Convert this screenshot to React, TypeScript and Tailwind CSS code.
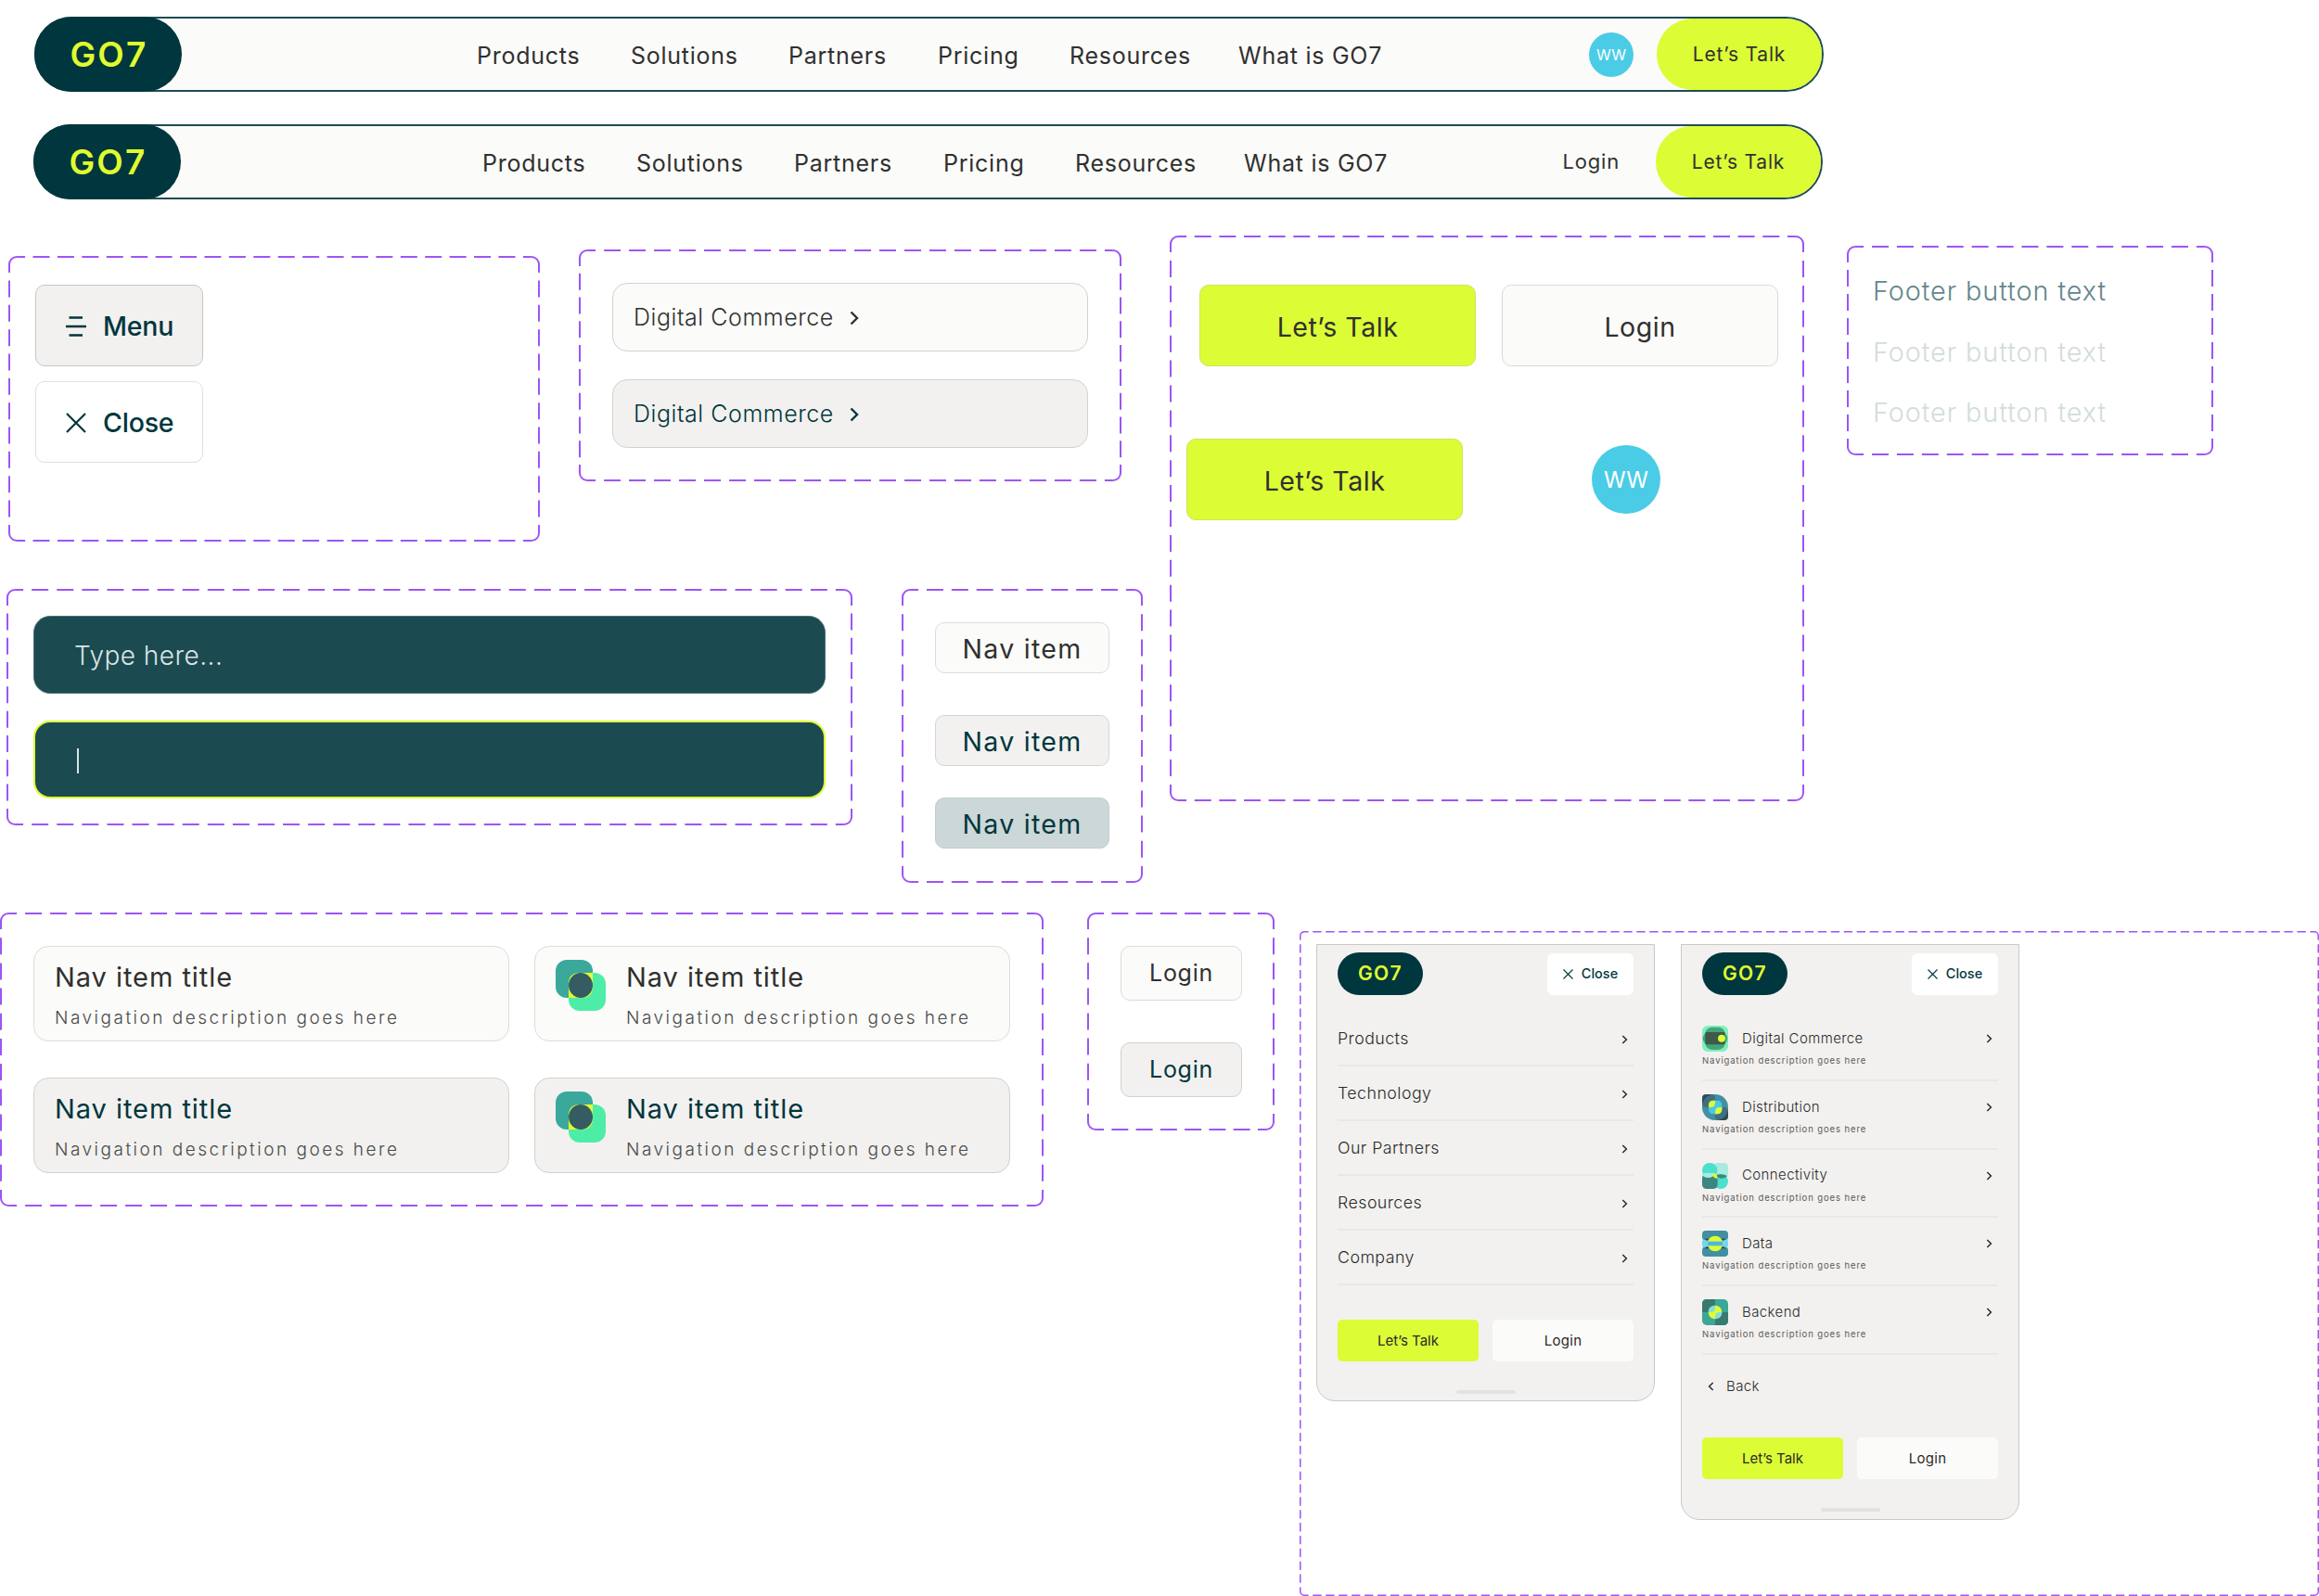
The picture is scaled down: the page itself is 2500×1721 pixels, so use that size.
import React from "react";

const NAV_LINKS = ["Products", "Solutions", "Partners", "Pricing", "Resources", "What is GO7"];
const MENU_LINKS = ["Products", "Technology", "Our Partners", "Resources", "Company"];

interface FrameProps {
  w: number;
  h: number;
  dash?: number;
  stroke?: number;
  className: string;
  children?: React.ReactNode;
}

// Component set outline: every side starts and ends on half a dash
const Frame = ({ w, h, dash = 18, stroke = 2, className, children }: FrameProps) => {
  const r = dash * 0.45;
  const s = stroke / 2;
  const side = (length: number) => {
    const pitch = length / Math.round(length / (dash * 1.5));
    return {
      strokeDasharray: `${dash} ${pitch - dash}`,
      strokeDashoffset: dash / 2,
    };
  };
  const across = side(w - 2 * (r + s));
  const down = side(h - 2 * (r + s));

  return (
    <div className={`relative shrink-0 ${className}`}>
      <svg
        width={w}
        height={h}
        fill="none"
        stroke="#9d55f5"
        strokeWidth={stroke}
        className="pointer-events-none absolute top-0 left-0"
      >
        <path d={`M${r + s} ${s}H${w - r - s}`} {...across} />
        <path d={`M${r + s} ${h - s}H${w - r - s}`} {...across} />
        <path d={`M${s} ${r + s}V${h - r - s}`} {...down} />
        <path d={`M${w - s} ${r + s}V${h - r - s}`} {...down} />
        <path d={`M${s} ${r + s}A${r} ${r} 0 0 1 ${r + s} ${s}`} />
        <path d={`M${w - r - s} ${s}A${r} ${r} 0 0 1 ${w - s} ${r + s}`} />
        <path d={`M${w - s} ${h - r - s}A${r} ${r} 0 0 1 ${w - r - s} ${h - s}`} />
        <path d={`M${r + s} ${h - s}A${r} ${r} 0 0 1 ${s} ${h - r - s}`} />
      </svg>
      {children}
    </div>
  );
};

const Chevron = ({ className }: { className: string }) => (
  <svg viewBox="0 0 10 16" fill="none" stroke="currentColor" strokeWidth="2.4" className={className}>
    <path d="M1.5 1.5L8 8L1.5 14.5" />
  </svg>
);

const Cross = ({ className }: { className: string }) => (
  <svg viewBox="0 0 22 22" fill="none" stroke="currentColor" strokeWidth="2.2" className={className}>
    <path d="M1 1L21 21M21 1L1 21" />
  </svg>
);

const Burger = () => (
  <svg viewBox="0 0 22 22" fill="none" stroke="currentColor" strokeWidth="2.6" className="size-[22px]">
    <path d="M3.5 1.5H18M0 11H22M3.5 20.5H18" />
  </svg>
);

const ShapesIcon = () => (
  <svg viewBox="0 0 54 55" className="h-[55px] w-[54px] shrink-0">
    <rect width="40" height="41" rx="12" fill="#3aa99b" />
    <rect x="14" y="14" width="40" height="41" rx="12" fill="#4deda8" />
    <path d="M26 14H40V29Q40 41 28 41H14V26Q14 14 26 14Z" fill="#e2fc2f" />
    <ellipse cx="27" cy="27.5" rx="13" ry="13.5" fill="#355c63" />
  </svg>
);

const CommerceIcon = () => (
  <svg viewBox="0 0 84 84" className="size-7">
    <rect width="84" height="84" rx="18" fill="#7df0be" />
    <rect x="10" y="5" width="64" height="73" rx="22" fill="#45a577" />
    <rect x="2" y="21" width="80" height="40" rx="20" fill="#45a577" />
    <rect x="10" y="21" width="64" height="40" rx="4" fill="#3d5a4a" />
    <circle cx="63" cy="41" r="12" fill="#dcfc36" />
  </svg>
);

const DistributionIcon = () => (
  <svg viewBox="0 0 84 84" className="size-7">
    <clipPath id="dist">
      <circle cx="42" cy="42" r="42" />
    </clipPath>
    <rect width="42" height="42" rx="12" fill="#2f4a52" />
    <rect x="42" y="42" width="42" height="42" rx="12" fill="#2f4a52" />
    <circle cx="42" cy="42" r="42" fill="#438fa3" />
    <g clipPath="url(#dist)">
      <rect width="42" height="42" rx="12" fill="#40707d" />
      <rect x="42" y="42" width="42" height="42" rx="12" fill="#40707d" />
    </g>
    <rect x="21" y="20" width="43" height="44" rx="14" fill="#4bc8e4" />
    <path d="M42 20V26Q42 42 27 42H21V36Q21 20 37 20Z" fill="#dcfc36" />
    <path d="M42 64V58Q42 42 57 42H64V48Q64 64 48 64Z" fill="#dcfc36" />
  </svg>
);

const ConnectivityIcon = () => (
  <svg viewBox="0 0 84 84" className="size-7">
    <rect x="36" width="48" height="48" rx="14" fill="#a8ebe0" />
    <rect width="49" height="48" rx="24" fill="#4bdfce" />
    <rect x="36" y="36" width="48" height="48" rx="24" fill="#4bdfce" />
    <rect y="36" width="50" height="48" rx="14" fill="#3b877d" />
    <path d="M0 36Q20 28 42 36Q34 48 20 48Q4 48 0 36Z" fill="#a8ebe0" />
    <path d="M44 40Q62 32 82 42Q74 50 62 50Q48 50 44 40Z" fill="#3b877d" />
    <path d="M32 32Q50 32 50 50Q34 50 32 32Z" fill="#dcfc36" />
  </svg>
);

const DataIcon = () => (
  <svg viewBox="0 0 84 84" className="size-7">
    <rect width="84" height="32" rx="12" fill="#418fa0" />
    <rect y="52" width="84" height="32" rx="12" fill="#418fa0" />
    <rect y="28" width="84" height="28" rx="10" fill="#74d5ee" />
    <path d="M6 26H78Q72 33 62 33H22Q12 33 6 26ZM6 58H78Q72 51 62 51H22Q12 51 6 58Z" fill="#22505a" />
    <circle cx="42" cy="42" r="25" fill="#dcfc36" />
    <rect x="18" y="35" width="48" height="14" fill="#4bb8dc" />
  </svg>
);

const BackendIcon = () => (
  <svg viewBox="0 0 84 84" className="size-7">
    <clipPath id="core">
      <circle cx="42" cy="42" r="22" />
    </clipPath>
    <rect width="84" height="84" rx="15" fill="#3ca796" />
    <path d="M0 15Q0 0 15 0H42V28Q42 42 28 42H0Z" fill="#387a70" />
    <path d="M84 69Q84 84 69 84H42V56Q42 42 56 42H84Z" fill="#387a70" />
    <circle cx="42" cy="42" r="22" fill="#dcfc36" />
    <g clipPath="url(#core)" fill="#83dedb">
      <path d="M0 0H42V28Q42 42 28 42H0Z" />
      <path d="M84 84H42V56Q42 42 56 42H84Z" />
    </g>
  </svg>
);

const PRODUCTS = [
  { title: "Digital Commerce", Icon: CommerceIcon },
  { title: "Distribution", Icon: DistributionIcon },
  { title: "Connectivity", Icon: ConnectivityIcon },
  { title: "Data", Icon: DataIcon },
  { title: "Backend", Icon: BackendIcon },
];

const NavBar = ({ className, links, children }: { className: string; links: string; children: React.ReactNode }) => (
  <header
    className={`flex h-[81px] w-[1929px] items-stretch rounded-[41px] border-2 border-[#1f4c54] bg-[#fbfbf9] ${className}`}
  >
    <div className="-my-0.5 -ml-0.5 flex w-[159px] shrink-0 items-center justify-center rounded-full bg-[#00363d] pt-px pl-0.5 text-[37px] font-semibold tracking-[2.2px] text-[#e0fc2f]">
      GO7
    </div>
    <nav
      className={`grid w-[980px] shrink-0 grid-cols-[166px_170px_161px_142px_182px_auto] items-center pt-[5px] text-[25px] tracking-[0.75px] text-[#303030] ${links}`}
    >
      {NAV_LINKS.map((link) => (
        <a key={link} className="whitespace-nowrap">
          {link}
        </a>
      ))}
    </nav>
    <div className="ml-auto flex items-center text-[21px] tracking-[0.8px] text-[#303030]">
      {children}
      <button className="flex w-[178px] items-center justify-center self-stretch rounded-full bg-[#dcfc36] pt-px">
        Let’s Talk
      </button>
    </div>
  </header>
);

const NavCard = ({ hover, icon }: { hover?: boolean; icon?: boolean }) => (
  <div
    className={`flex h-[103px] w-[513px] gap-[22px] rounded-2xl border pt-[14px] pl-[22px] ${
      hover ? "border-[#d2d1cf] bg-[#f2f1ef]" : "border-[#dcdcda] bg-[#fbfbf9]"
    }`}
  >
    {icon && <ShapesIcon />}
    <div>
      <h4 className={`-mt-px text-[29px] leading-10 tracking-[0.95px] ${hover ? "text-[#00363d]" : "text-[#303030]"}`}>
        Nav item title
      </h4>
      <p className="mt-3 text-[19px] leading-6 font-light tracking-[2.5px] whitespace-nowrap text-[#4a4a4a]">
        Navigation description goes here
      </p>
    </div>
  </div>
);

const MobileMenu = ({ className, children }: { className: string; children: React.ReactNode }) => (
  <div
    className={`flex w-[365px] flex-col rounded-b-[20px] border border-[#c9c9c9] bg-[#f2f1ef] px-[22px] pt-2 text-[#2b2b2b] ${className}`}
  >
    <div className="flex items-center justify-between">
      <div className="flex h-[46px] w-[92px] items-center justify-center rounded-full bg-[#00363d] text-[21px] font-semibold tracking-[1.3px] text-[#e0fc2f]">
        GO7
      </div>
      <button className="flex h-[45px] w-[93px] items-center justify-center gap-[9px] rounded-md bg-white text-[14.5px] font-medium text-[#00363d]">
        <Cross className="size-[11px]" />
        Close
      </button>
    </div>
    {children}
    <div className="flex justify-between text-[15px]">
      <button className="h-[45px] w-[152px] rounded-[5px] bg-[#dcfc36] pt-px">Let’s Talk</button>
      <button className="h-[45px] w-[152px] rounded-[5px] bg-[#fbfbf9] pt-px tracking-[0.3px]">Login</button>
    </div>
    <div className="mx-auto mt-[31px] h-1 w-16 rounded-full bg-[#e3e2e0]" />
  </div>
);

const App = () => {
  return (
    <div className="h-[1721px] w-[2500px] overflow-hidden bg-white pt-[18px] font-['Inter','Liberation_Sans',sans-serif]">
      <NavBar className="ml-[37px]" links="ml-[318px]">
        <span className="mr-[25px] flex size-12 items-center justify-center rounded-full bg-[#4bcce6] text-[16px] tracking-normal text-white">
          WW
        </span>
      </NavBar>
      <NavBar className="mt-[35px] ml-[36px]" links="ml-[325px]">
        <span className="mr-[39px] text-[22px]">Login</span>
      </NavBar>

      <main className="mt-[39px]">
        <section className="flex h-[698px] items-start">
          <div className="w-[1232px] shrink-0">
            <div className="flex h-[330px] items-start">
              <Frame w={573} h={308} className="mt-[22px] ml-[9px] h-[308px] w-[573px] pt-[31px] pl-[29px]">
                <div className="flex flex-col gap-4 text-[28.5px] tracking-[-0.2px] text-[#00363d]">
                  <button className="flex h-[88px] w-[181px] items-center gap-[18px] rounded-[10px] border border-[#c6c6c4] bg-[#f2f1ef] pt-0.5 pl-8 font-medium">
                    <Burger />
                    Menu
                  </button>
                  <button className="flex h-[88px] w-[181px] items-center gap-[18px] rounded-[10px] border border-[#e0e0e0] bg-white pt-0.5 pl-8 font-medium">
                    <Cross className="size-[22px]" />
                    Close
                  </button>
                </div>
              </Frame>
              <Frame w={585} h={250} className="mt-[15px] ml-[42px] h-[250px] w-[585px] px-9 pt-9">
                <div className="flex flex-col gap-[30px] text-[25px] font-light tracking-[0.55px]">
                  <div className="flex h-[74px] items-center gap-[17px] rounded-2xl border border-[#d2d2d0] bg-[#fbfbf9] pt-px pl-[22px] text-[#303030]">
                    Digital Commerce
                    <Chevron className="h-4 w-[10px]" />
                  </div>
                  <div className="flex h-[74px] items-center gap-[17px] rounded-2xl border border-[#d2d2d0] bg-[#f2f1ef] pt-px pl-[22px] text-[#00363d]">
                    Digital Commerce
                    <Chevron className="h-4 w-[10px]" />
                  </div>
                </div>
              </Frame>
            </div>

            <div className="mt-[51px] flex items-start">
              <Frame w={912} h={255} className="ml-[7px] h-[255px] w-[912px] px-[29px] pt-[29px]">
                <div className="flex h-[84px] items-center rounded-[18px] border border-[#4b7177] bg-[#1b4a51] pt-0.5 pl-[43px] text-[28px] font-light tracking-[0.45px] text-[#dbe4e4]">
                  Type here...
                </div>
                <div className="mt-[29px] flex h-[84px] items-center rounded-[18px] border-2 border-[#dcfc36] bg-[#1b4a51] pt-0.5 pl-[45px]">
                  <span className="h-[27px] w-[2px] bg-[#dbe4e4]" />
                </div>
              </Frame>
              <Frame w={260} h={317} className="ml-[53px] h-[317px] w-[260px] px-9 pt-9">
                <div className="flex flex-col text-[28.5px] tracking-[1.3px]">
                  <button className="h-[55px] rounded-[10px] border border-[#dcdcda] bg-[#fbfbf9] pt-[3px] text-[#303030]">
                    Nav item
                  </button>
                  <button className="mt-[45px] h-[55px] rounded-[10px] border border-[#d6d5d3] bg-[#f2f1ef] pt-[3px] text-[#00363d]">
                    Nav item
                  </button>
                  <button className="mt-[34px] h-[55px] rounded-[10px] border border-[#c2cccc] bg-[#ccd7d8] pt-[3px] text-[#00363d]">
                    Nav item
                  </button>
                </div>
              </Frame>
            </div>
          </div>

          <Frame w={684} h={610} className="ml-[29px] h-[610px] w-[684px] pt-[53px] text-[28.5px] tracking-[0.55px] text-[#303030]">
            <div className="ml-8 flex gap-7">
              <button className="h-[88px] w-[298px] rounded-[10px] border border-[#d3e35a] bg-[#dcfc36] pt-1">
                Let’s Talk
              </button>
              <button className="h-[88px] w-[298px] rounded-[10px] border border-[#dadad8] bg-[#fbfbf9] pt-1">
                Login
              </button>
            </div>
            <div className="mt-[78px] ml-[18px] flex items-center">
              <button className="h-[88px] w-[298px] rounded-[10px] border border-[#d3e35a] bg-[#dcfc36] pt-1">
                Let’s Talk
              </button>
              <span className="ml-[139px] flex size-[74px] items-center justify-center rounded-full bg-[#4bcce6] pt-0.5 text-[24px] tracking-normal text-white">
                WW
              </span>
            </div>
          </Frame>

          <Frame w={395} h={226} className="mt-[11px] ml-[46px] h-[226px] w-[395px] pt-[29px] pl-[28px]">
            <div className="flex flex-col gap-[25.5px] text-[28.8px] leading-10 font-light tracking-[0.95px] text-[#d3dcdc]">
              <a className="text-[#64868b]">Footer button text</a>
              <a>Footer button text</a>
              <a>Footer button text</a>
            </div>
          </Frame>
        </section>

        <section className="mt-8 flex items-start">
          <Frame w={1125} h={317} className="h-[317px] w-[1125px] pt-9 pl-9">
            <div className="grid grid-cols-[513px_513px] gap-x-[27px] gap-y-[39px]">
              <NavCard />
              <NavCard icon />
              <NavCard hover />
              <NavCard hover icon />
            </div>
          </Frame>

          <Frame w={202} h={235} className="ml-[47px] h-[235px] w-[202px] pt-9 pl-9">
            <div className="flex w-[131px] flex-col gap-[45px] text-[25px] tracking-[0.7px]">
              <button className="h-[59px] rounded-[10px] border border-[#dcdcda] bg-[#fbfbf9] pt-px text-[#303030]">
                Login
              </button>
              <button className="h-[59px] rounded-[10px] border border-[#d2d1cf] bg-[#f2f1ef] pt-px text-[#00363d]">
                Login
              </button>
            </div>
          </Frame>

          <Frame w={1099} h={717} dash={9.3} stroke={1.5} className="mt-5 ml-[27px] h-[717px] w-[1099px] pt-[14px] pl-[18px]">
            <div className="flex items-start gap-7">
              <MobileMenu className="h-[493px]">
                <ul className="mt-[18px] mb-[37px] text-[17.8px] font-light tracking-[0.45px]">
                  {MENU_LINKS.map((link) => (
                    <li key={link} className="flex h-[59px] items-center justify-between border-b-2 border-[#e9e8e6] pt-0.5 pr-1.5">
                      {link}
                      <Chevron className="h-[10px] w-[7px]" />
                    </li>
                  ))}
                </ul>
              </MobileMenu>
              <MobileMenu className="h-[621px]">
                <ul className="mt-[19px] text-[15px] font-light">
                  {PRODUCTS.map(({ title, Icon }) => (
                    <li key={title} className="h-[73.8px] border-b-2 border-[#e9e8e6] pt-[14px]">
                      <div className="flex items-center pr-1.5">
                        <Icon />
                        <span className="ml-[15px] tracking-[0.4px]">{title}</span>
                        <Chevron className="ml-auto h-[10px] w-[7px]" />
                      </div>
                      <p className="mt-1 text-[9.5px] leading-3 font-normal tracking-[0.9px] text-[#5a5a5a]">
                        Navigation description goes here
                      </p>
                    </li>
                  ))}
                </ul>
                <a className="mt-[22px] mb-[43px] flex h-6 items-center gap-[13px] pl-[6px] text-[15px] font-light tracking-[0.4px]">
                  <Chevron className="h-[10px] w-[7px] rotate-180" />
                  Back
                </a>
              </MobileMenu>
            </div>
          </Frame>
        </section>
      </main>
    </div>
  );
};

export default App;
